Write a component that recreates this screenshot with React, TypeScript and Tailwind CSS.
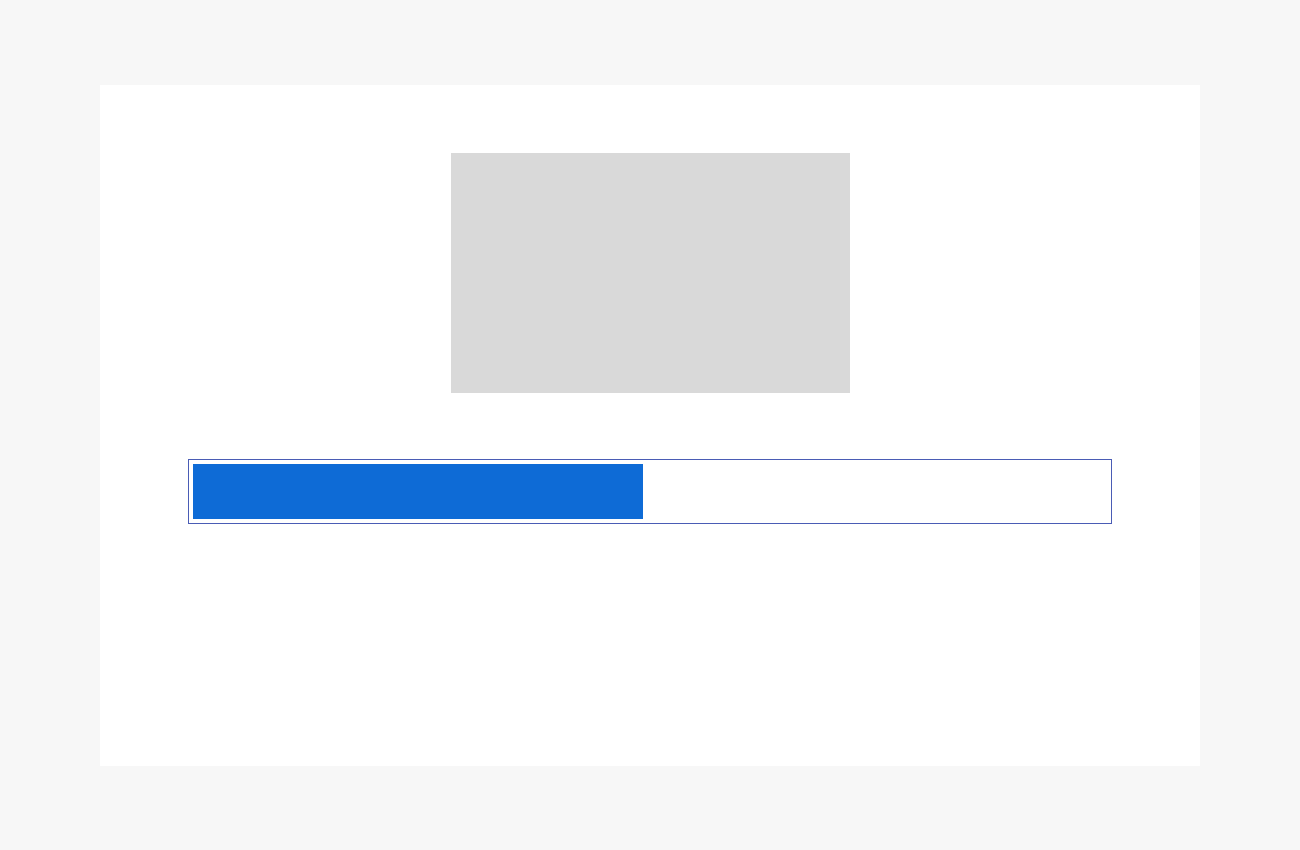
export default function App() {
  return (
    <div className="min-h-[850px] w-full bg-[#f7f7f7] pt-[85px]">
      <div className="mx-auto flex h-[681px] w-[1100px] flex-col items-center bg-white pt-[68px]">
        <div className="ml-[1px] h-[240px] w-[399px] bg-[#d9d9d9]" />
        <div className="mt-[66px] h-[65px] w-[924px] border border-[#4a5cb5] p-[4px]">
          <div className="h-full w-[450px] bg-[#0e6bd6]" />
        </div>
      </div>
    </div>
  );
}
